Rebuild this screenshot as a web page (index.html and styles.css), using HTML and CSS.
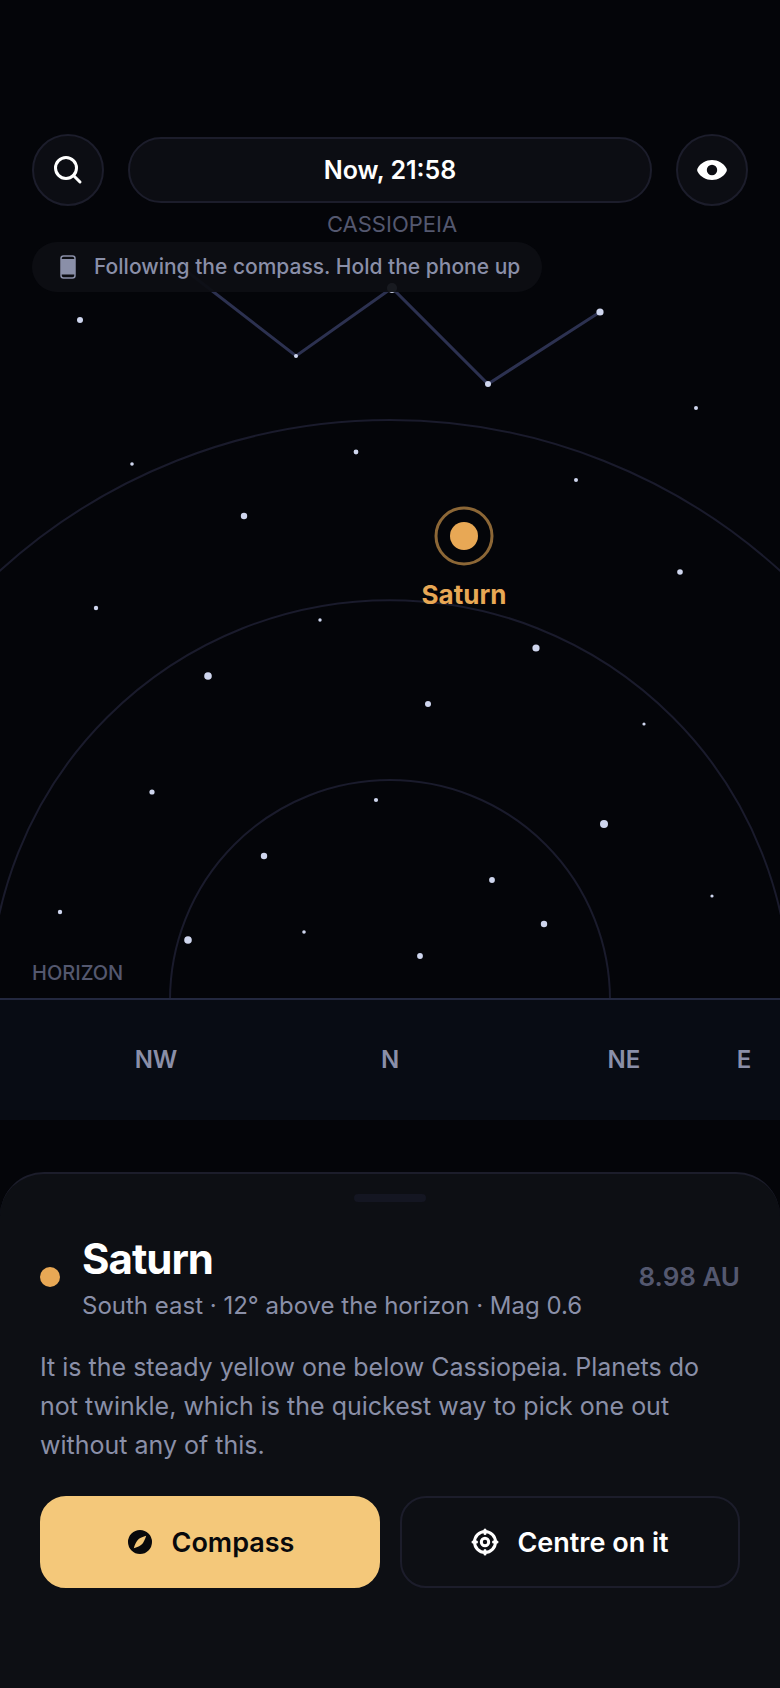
FILE: index.html
```html
<!DOCTYPE html>
<html lang="en">

<head>
  <meta charset="utf-8">
  <meta name="viewport" content="width=device-width, initial-scale=1">
  <title>Sky</title>
  <link rel="stylesheet" href="styles.css">
</head>

<body>
  <main class="screen">
    <section class="sky">
      <svg class="sky-map" viewBox="0 0 780 1120" role="img" aria-label="Sky map facing north">
        <g class="rings">
          <path d="M-190 1000a580 580 0 0 1 1160 0" />
          <path d="M-10 1000a400 400 0 0 1 800 0" />
          <path d="M170 1000a220 220 0 0 1 440 0" />
        </g>
        <polyline class="constellation" points="180,266 296,356 392,288 488,384 600,312" />
        <g class="stars">
          <circle cx="80" cy="320" r="3" />
          <circle cx="180" cy="266" r="3" />
          <circle cx="296" cy="356" r="2" />
          <circle cx="392" cy="288" r="5" />
          <circle cx="488" cy="384" r="3" />
          <circle cx="600" cy="312" r="3.6" />
          <circle cx="696" cy="408" r="2" />
          <circle cx="132" cy="464" r="1.8" />
          <circle cx="356" cy="452" r="2.4" />
          <circle cx="576" cy="480" r="2" />
          <circle cx="244" cy="516" r="3.2" />
          <circle cx="680" cy="572" r="2.8" />
          <circle cx="96" cy="608" r="2.2" />
          <circle cx="320" cy="620" r="1.7" />
          <circle cx="536" cy="648" r="3.6" />
          <circle cx="208" cy="676" r="3.8" />
          <circle cx="428" cy="704" r="3" />
          <circle cx="644" cy="724" r="1.6" />
          <circle cx="152" cy="792" r="2.6" />
          <circle cx="376" cy="800" r="2.1" />
          <circle cx="604" cy="824" r="4" />
          <circle cx="264" cy="856" r="3.2" />
          <circle cx="492" cy="880" r="2.9" />
          <circle cx="712" cy="896" r="1.6" />
          <circle cx="60" cy="912" r="2.2" />
          <circle cx="188" cy="940" r="3.8" />
          <circle cx="304" cy="932" r="1.8" />
          <circle cx="544" cy="924" r="3.2" />
          <circle cx="420" cy="956" r="2.9" />
        </g>
        <text class="label-constellation" x="392" y="232">CASSIOPEIA</text>
        <circle class="planet" cx="464" cy="536" r="14" />
        <circle class="planet-ring" cx="464" cy="536" r="28" />
        <text class="label-planet" x="464" y="604">Saturn</text>
        <text class="label-horizon" x="32" y="980">HORIZON</text>
        <rect class="ground" x="0" y="998" width="780" height="122" />
        <rect class="horizon" x="0" y="998" width="780" height="2" />
        <g class="bearings">
          <text x="156" y="1068">NW</text>
          <text x="390" y="1068">N</text>
          <text x="624" y="1068">NE</text>
          <text x="744" y="1068">E</text>
        </g>
      </svg>

      <header class="toolbar">
        <div class="toolbar-row">
          <button class="round-btn" type="button" aria-label="Search">
            <svg width="32" height="32" viewBox="0 0 32 32" fill="none" stroke="currentColor" stroke-width="3" stroke-linecap="round">
              <circle cx="14" cy="14" r="10.5" />
              <path d="M21.5 21.5l6.5 6.5" />
            </svg>
          </button>
          <button class="time-btn" type="button">Now, 21:58</button>
          <button class="round-btn" type="button" aria-label="Visibility">
            <svg width="32" height="32" viewBox="0 0 32 32" fill="currentColor" fill-rule="evenodd">
              <path d="M16 6C10 6 4.500 9 1.500 14.500Q.700 16 1.500 17.500C4.500 23 10 26 16 26s11.500-3 14.500-8.500q.800-1.500 0-3C27.500 9 22 6 16 6zm0 4.800a5.200 5.200 0 1 1 0 10.400a5.200 5.200 0 0 1 0-10.400z" />
            </svg>
          </button>
        </div>
        <p class="hint">
          <svg width="16" height="24" viewBox="0 0 16 24" aria-hidden="true">
            <rect x="1" y="1" width="14" height="22" rx="2.500" fill="none" stroke="currentColor" stroke-width="1.500" />
            <path d="M1 4h14v15.500H1z" fill="currentColor" />
          </svg>
          Following the compass. Hold the phone up
        </p>
      </header>
    </section>

    <section class="sheet">
      <div class="handle"></div>
      <div class="object">
        <span class="object-dot"></span>
        <div class="object-info">
          <h1>Saturn</h1>
          <p>South east · 12° above the horizon · Mag 0.6</p>
        </div>
        <span class="distance">8.98 AU</span>
      </div>
      <p class="about">It is the steady yellow one below Cassiopeia. Planets do not twinkle, which is the quickest way to pick one out without any of this.</p>
      <div class="actions">
        <button class="btn btn-primary" type="button">
          <svg width="28" height="28" viewBox="0 0 28 28" fill="currentColor" fill-rule="evenodd" aria-hidden="true">
            <path d="M14 2a12 12 0 1 1 0 24a12 12 0 0 1 0-24zM20.200 7.800C16 9 13 10.500 11.800 12S9 16 7.800 20.200C12 19 15 17.500 16.200 16S19 12 20.200 7.800z" />
          </svg>
          Compass
        </button>
        <button class="btn btn-outline" type="button">
          <svg width="28" height="28" viewBox="0 0 28 28" fill="none" stroke="currentColor" stroke-width="3" stroke-linecap="round" aria-hidden="true">
            <circle cx="14" cy="14" r="10.500" />
            <circle cx="14" cy="14" r="3.700" />
            <path d="M14 2v3.500M14 22.500v3.500M2 14h3.500M22.500 14h3.500" />
          </svg>
          Centre on it
        </button>
      </div>
    </section>
  </main>
</body>

</html>
```

FILE: styles.css
```css
* {
  box-sizing: border-box;
}

body {
  margin: 0;
  background: #040509;
  color: #fff;
  font-family: Inter, "Liberation Sans", sans-serif;
}

h1,
p {
  margin: 0;
}

button {
  font-family: inherit;
  color: inherit;
  cursor: pointer;
}

.screen {
  display: flex;
  flex-direction: column;
  min-height: 100vh;
}

/* map and toolbar share one grid cell */
.sky {
  display: grid;
}

.sky-map,
.toolbar {
  grid-area: 1 / 1;
}

.sky-map {
  display: block;
  width: 100%;
}

.rings {
  fill: none;
  stroke: #1a1b2c;
  stroke-width: 2;
}

.constellation {
  fill: none;
  stroke: #2c3150;
  stroke-width: 3;
}

.stars {
  fill: #cfd6ee;
}

.label-constellation {
  fill: #54586f;
  font-size: 22px;
  text-anchor: middle;
}

.label-horizon {
  fill: #54586f;
  font-size: 20px;
  font-weight: 500;
}

.planet {
  fill: #e8a855;
}

.planet-ring {
  fill: none;
  stroke: #e8a855;
  stroke-width: 3;
  opacity: .6;
}

.label-planet {
  fill: #e8a855;
  font-size: 26px;
  font-weight: 700;
  text-anchor: middle;
}

.ground {
  fill: #080c14;
}

.horizon {
  fill: #23283f;
}

.bearings {
  fill: #8a8fa8;
  font-size: 24px;
  font-weight: 600;
  text-anchor: middle;
}

.toolbar {
  position: relative;
  display: flex;
  flex-direction: column;
  align-items: flex-start;
  gap: 36px;
  padding: 134px 32px 0;
}

.toolbar-row {
  display: flex;
  align-items: center;
  gap: 24px;
  width: 100%;
}

.round-btn {
  display: flex;
  align-items: center;
  justify-content: center;
  width: 72px;
  height: 72px;
  padding: 0;
  border: 2px solid #1c1d2b;
  border-radius: 50%;
  background: #0c0d13;
}

.time-btn {
  flex: 1;
  height: 66px;
  border: 2px solid #1c1d2b;
  border-radius: 33px;
  background: #0c0d13;
  font-size: 25px;
  font-weight: 600;
}

.hint {
  display: flex;
  align-items: center;
  gap: 18px;
  padding: 12px 22px 12px 28px;
  border-radius: 25px;
  background: rgba(13, 14, 19, .94);
  color: #8a8fa8;
  font-size: 21px;
  font-weight: 500;
  line-height: 26px;
}

.sheet {
  flex: 1;
  margin-top: 52px;
  padding: 20px 40px 100px;
  border-top: 2px solid #1c1d2b;
  border-radius: 44px 44px 0 0;
  background: #0d0f14;
}

.handle {
  width: 72px;
  height: 8px;
  margin: 0 auto;
  border-radius: 4px;
  background: #141622;
}

.object {
  display: flex;
  align-items: center;
  gap: 22px;
  margin-top: 29px;
}

.object-dot {
  width: 20px;
  height: 20px;
  border-radius: 50%;
  background: #e8a855;
}

.object-info {
  flex: 1;
}

.object-info h1 {
  font-size: 42px;
  font-weight: 700;
  line-height: 56px;
  letter-spacing: -1px;
}

.object-info p {
  margin-top: 3px;
  color: #8a8fa8;
  font-size: 24px;
  line-height: 32px;
}

.distance {
  color: #54586f;
  font-size: 26px;
  font-weight: 600;
}

.about {
  margin-top: 26px;
  color: #8a8fa8;
  font-size: 25px;
  line-height: 39px;
}

.actions {
  display: flex;
  gap: 20px;
  margin-top: 31px;
}

.btn {
  display: flex;
  flex: 1;
  align-items: center;
  justify-content: center;
  gap: 18px;
  height: 92px;
  padding: 0;
  border: 2px solid #1c1d2b;
  border-radius: 26px;
  background: none;
  font-size: 27px;
  font-weight: 600;
}

.btn-primary {
  border-color: #f4c87a;
  background: #f4c87a;
  color: #08090c;
}
```
